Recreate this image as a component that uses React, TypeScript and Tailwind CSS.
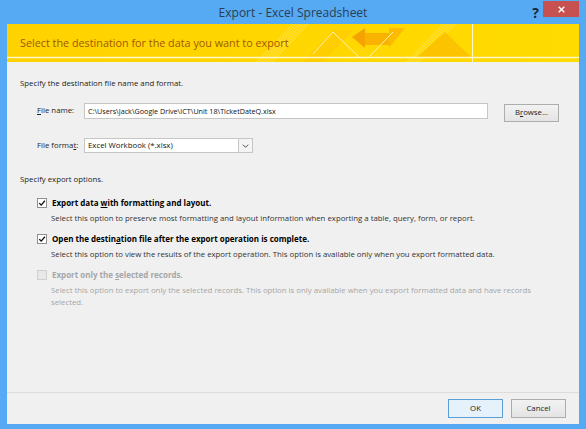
import React from 'react';

const font = { fontFamily: '"Open Sans", "Noto Sans", sans-serif' };

const Check = ({ checked, disabled }: { checked?: boolean; disabled?: boolean }) => (
  <div
    className={`w-[10px] h-[10px] flex items-center justify-center border ${
      disabled ? 'border-[#cfcfcf] bg-[#e8e8e8]' : 'border-[#8f8f8f] bg-white'
    }`}
  >
    {checked && (
      <svg viewBox="0 0 10 10" className="w-[8px] h-[8px]">
        <path d="M1.5 5.2 L4 7.6 L8.6 2.2" fill="none" stroke="#111" strokeWidth="1.6" />
      </svg>
    )}
  </div>
);

const Banner = () => (
  <div className="relative h-[38px] bg-gradient-to-r from-[#ffd200] to-[#ffdb00] overflow-hidden">
    <svg className="absolute inset-0" width="572" height="38" viewBox="0 0 572 38">
      {/* faint diagonal stripes */}
      {[0, 3, 6, 9, 12, 15].map((o) => (
        <line key={'a' + o} x1={250 + o} y1={38} x2={286 + o} y2={0} stroke="#ffe766" strokeWidth="0.8" />
      ))}
      {[0, 3, 6, 9, 12].map((o) => (
        <line key={'b' + o} x1={400 + o} y1={38} x2={436 + o} y2={0} stroke="#ffe766" strokeWidth="0.8" />
      ))}
      <polygon points="296,38 326,6 346,6 316,38" fill="#ffc800" opacity="0.6" />
      <polygon points="345,13 358,4 358,24" fill="#f5a300" />
      <rect x="358" y="9" width="24" height="12" fill="#f9b200" />
      <polygon points="382,4 398,4 382,24" fill="#fbbb00" />
      <polygon points="410,33 438,8 464,33" fill="#fcc400" />
      <polyline points="306,30 326,8 352,33" fill="none" stroke="#fff4b0" strokeWidth="1" />
      <polyline points="362,33 386,8" fill="none" stroke="#fff4b0" strokeWidth="1" />
      <line x1="0" y1="33.5" x2="572" y2="33.5" stroke="#fff6c8" strokeWidth="1.5" />
      <line x1="465.5" y1="0" x2="465.5" y2="38" stroke="#fff6c8" strokeWidth="1" />
    </svg>
    <div className="relative pl-[13px] pt-[11px] text-[10.8px] text-[#a25800]" style={font}>
      Select the destination for the data you want to export
    </div>
  </div>
);

const Option = ({
  title,
  desc,
  checked,
  disabled,
}: {
  title: React.ReactNode;
  desc: React.ReactNode;
  checked?: boolean;
  disabled?: boolean;
}) => (
  <div className="flex flex-col">
    <div className="flex items-center h-[12px]">
      <div className="w-[15px]">
        <Check checked={checked} disabled={disabled} />
      </div>
      <span className={`text-[8px] font-bold ${disabled ? 'text-[#a6a6a6]' : 'text-black'}`}>{title}</span>
    </div>
    <div
      className={`pl-[14px] mt-[3px] text-[7.8px] leading-[12px] w-[500px] ${
        disabled ? 'text-[#a6a6a6]' : 'text-[#333]'
      }`}
    >
      {desc}
    </div>
  </div>
);

export default function App() {
  return (
    <div className="w-[586px] h-[429px] bg-[#56a9f3] flex flex-col px-[7px] pb-[5px]" style={font}>
      <div className="relative h-[24px] flex items-center justify-center shrink-0">
        <span className="text-[12px] text-[#2c3e50] mt-[1px]">Export - Excel Spreadsheet</span>
        <span className="absolute right-[40px] top-[2px] text-[14px] font-bold text-[#1d2733]">?</span>
        <div className="absolute right-0 top-[1px] w-[36px] h-[16px] bg-[#c75050] flex items-center justify-center">
          <svg viewBox="0 0 10 10" className="w-[7px] h-[7px]">
            <path d="M1 1 L9 9 M9 1 L1 9" stroke="#fff" strokeWidth="2" />
          </svg>
        </div>
      </div>

      <div className="flex-1 bg-[#f0f0f0] flex flex-col">
        <Banner />

        <div className="flex-1 flex flex-col pl-[13px] pt-[15px]">
          <div className="text-[7.8px] leading-[12px] text-[#222]">Specify the destination file name and format.</div>

          <div className="flex items-start mt-[14px] pl-[17px]">
            <div className="w-[47px] h-[16px] flex items-center text-[7.8px] text-[#222]">
              <span>
                <u>F</u>ile name:
              </span>
            </div>
            <div className="w-[404px] h-[16px] bg-white border border-[#c6c6c6] flex items-center pl-[3px] text-[7.2px] text-[#111]">
              C:\Users\Jack\Google Drive\ICT\Unit 18\TicketDateQ.xlsx
            </div>
            <div className="ml-[16px] mt-[1px] w-[55px] h-[18px] border border-[#adadad] bg-gradient-to-b from-[#f2f2f2] to-[#e4e4e4] flex items-center justify-center text-[7.8px] text-[#222]">
              B<u>r</u>owse...
            </div>
          </div>

          <div className="flex items-center mt-[16px] pl-[17px]">
            <div className="w-[47px] text-[7.8px] text-[#222]">
              File forma<u>t</u>:
            </div>
            <div className="w-[169px] h-[15px] bg-white border border-[#c6c6c6] flex items-center">
              <span className="flex-1 pl-[3px] text-[7.8px] text-[#111]">Excel Workbook (*.xlsx)</span>
              <div className="w-[14px] h-full border-l border-[#c6c6c6] bg-[#f4f4f4] flex items-center justify-center">
                <svg viewBox="0 0 10 6" className="w-[7px] h-[4px]">
                  <path d="M1 1 L5 5 L9 1" fill="none" stroke="#333" strokeWidth="1.3" />
                </svg>
              </div>
            </div>
          </div>

          <div className="mt-[20px] text-[7.8px] leading-[12px] text-[#222]">Specify export options.</div>

          <div className="flex flex-col gap-[9px] mt-[12px] pl-[17px]">
            <Option
              checked
              title={
                <>
                  Export data <u>w</u>ith formatting and layout.
                </>
              }
              desc="Select this option to preserve most formatting and layout information when exporting a table, query, form, or report."
            />
            <Option
              checked
              title={
                <>
                  Open the destin<u>a</u>tion file after the export operation is complete.
                </>
              }
              desc="Select this option to view the results of the export operation. This option is available only when you export formatted data."
            />
            <Option
              disabled
              title={
                <>
                  Export only the <u>s</u>elected records.
                </>
              }
              desc="Select this option to export only the selected records. This option is only available when you export formatted data and have records selected."
            />
          </div>
        </div>

        <div className="h-[32px] border-t border-[#dcdcdc] flex items-center justify-end gap-[8px] pr-[13px] shrink-0">
          <div className="w-[55px] h-[19px] border border-[#5c9fd6] bg-[#e5f1fb] flex items-center justify-center text-[7.8px] text-[#222]">
            OK
          </div>
          <div className="w-[55px] h-[19px] border border-[#adadad] bg-gradient-to-b from-[#f2f2f2] to-[#e4e4e4] flex items-center justify-center text-[7.8px] text-[#222]">
            Cancel
          </div>
        </div>
      </div>
    </div>
  );
}
